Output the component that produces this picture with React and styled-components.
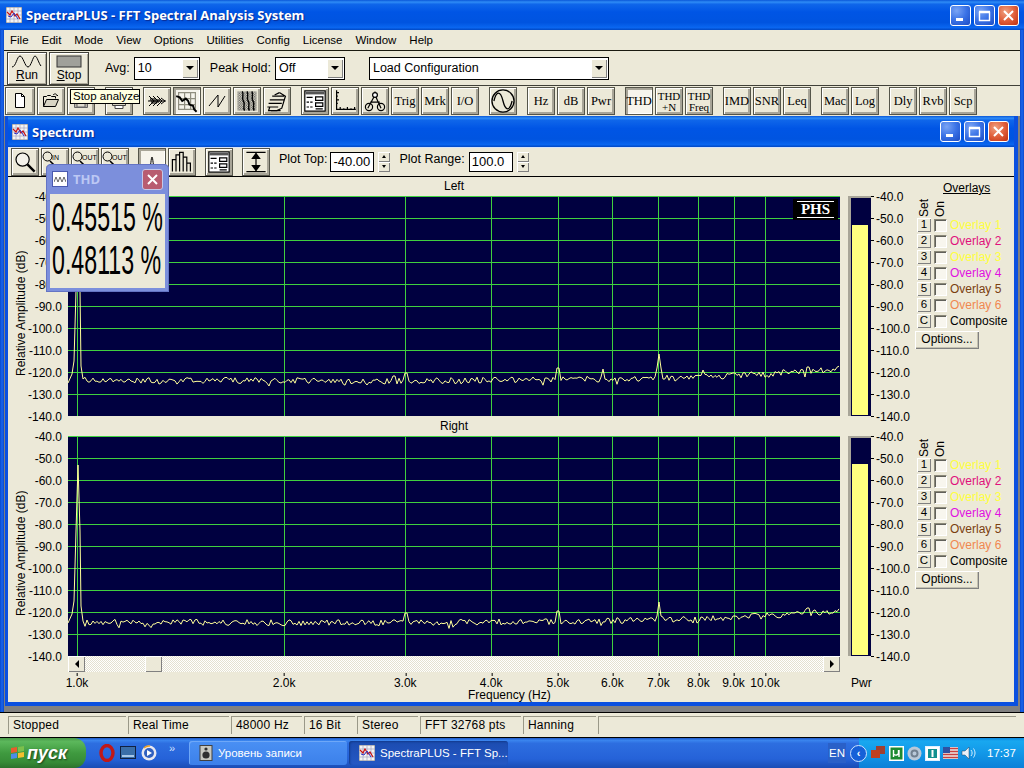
import styled, { createGlobalStyle } from "styled-components";

const GlobalStyle = createGlobalStyle`
  html, body {
    margin: 0;
    width: 1024px;
    height: 768px;
    overflow: hidden;
    background: #ece9d8;
  }
  * { box-sizing: border-box; }
`;

const Desktop = styled.div`
  position: relative;
  width: 1024px;
  height: 768px;
  display: flex;
  flex-direction: column;
  overflow: hidden;
  font-family: "Liberation Sans", Arial, sans-serif;
  font-size: 12px;
  color: #000;
`;

const TitleBar = styled.div`
  height: ${(p) => (p.$child ? "31px" : "30px")};
  flex: none;
  display: flex;
  align-items: center;
  gap: 4px;
  padding: ${(p) => (p.$child ? "0 5px 0 4px" : "0 5px 0 6px")};
  color: #fff;
  font-family: "Open Sans", "Liberation Sans", sans-serif;
  font-weight: 700;
  font-size: 13px;
  text-shadow: 1px 1px 1px #0a2a90;
  background: linear-gradient(180deg, #0a57d8 0%, #2f8cf6 7%, #0f66ea 14%, #0055e5 40%, #0054e0 75%, #0a66f0 92%, #0048c4 100%);
`;

const TitleText = styled.span`
  flex: 1;
  white-space: nowrap;
`;

const WinButtons = styled.div`
  display: flex;
  gap: 3px;
`;

const WinButton = styled.div`
  width: 21px;
  height: 21px;
  border: 1px solid #fff;
  border-radius: 3px;
  display: flex;
  align-items: center;
  justify-content: center;
  background: ${(p) =>
    p.$close
      ? "radial-gradient(circle at 35% 30%, #f0a080 0%, #e0603c 50%, #c03010 100%)"
      : "radial-gradient(circle at 30% 25%, #7aa4f4 0%, #3a72e6 50%, #1c4cc4 100%)"};
`;

const MainBody = styled.div`
  flex: 1;
  display: flex;
  flex-direction: column;
  min-height: 0;
  padding: 0 4px;
  background: linear-gradient(90deg, #0a48c8 0, #1a66ee 2px, #0a48c8 4px, #0a48c8 1020px, #1a66ee 1022px, #0a48c8 1024px);
`;

const MenuBar = styled.div`
  height: 20px;
  flex: none;
  display: flex;
  align-items: center;
  background: #ece9d8;
  padding-left: 6px;
  gap: 13px;
  font-size: 11.5px;
`;

const RunBar = styled.div`
  height: 35px;
  flex: none;
  display: flex;
  align-items: center;
  border-top: 1px solid #1a1a10;
  background: #ece9d8;
  padding-left: 3px;
`;

const RunButton = styled.button`
  width: 40px;
  height: 33px;
  padding: 1px 0 0;
  margin-right: 2px;
  margin-top: 1px;
  border: 1px solid #404038;
  background: #ece9d8;
  box-shadow: inset 1px 1px #fff, inset -1px -1px #aca899;
  display: flex;
  flex-direction: column;
  align-items: center;
  font: 12px "Liberation Sans", sans-serif;
  line-height: 13px;
  color: #000;
`;

const FieldLabel = styled.span`
  margin-left: ${(p) => p.$ml || 10}px;
  margin-right: 4px;
  font-size: 12.5px;
  white-space: nowrap;
`;

const Select = styled.div`
  width: ${(p) => p.$w}px;
  height: 23px;
  margin-left: ${(p) => p.$ml || 0}px;
  border: 1px solid #000;
  background: #fff;
  display: flex;
  align-items: center;
  justify-content: space-between;
  padding: 0 1px 0 3px;
  font-size: 12.5px;
`;

const DropArrow = styled.div`
  width: 16px;
  height: 19px;
  background: #ece9d8;
  box-shadow: inset 1px 1px #fff, inset -1px -1px #808080;
  display: flex;
  align-items: center;
  justify-content: center;
  &::after {
    content: "";
    border: 4px solid transparent;
    border-top: 4px solid #000;
    border-bottom: 0;
    border-left-width: 4px;
    border-right-width: 4px;
  }
`;

const ToolBar = styled.div`
  height: 31px;
  flex: none;
  display: flex;
  align-items: center;
  gap: ${(p) => p.$gap}px;
  padding-left: ${(p) => p.$pad}px;
  border-top: 1px solid #404038;
  background: #ece9d8;
`;

const Group = styled.div`
  display: flex;
  gap: 2px;
`;

const ToolButton = styled.div`
  width: ${(p) => p.$w || 28}px;
  height: 28px;
  flex: none;
  border: 1px solid #55554a;
  background: ${(p) => (p.$on ? "#f6f4ec" : "#ece9d8")};
  box-shadow: ${(p) =>
    p.$on
      ? "inset 2px 2px #a8a598, inset -1px -1px #fff"
      : "inset 1px 1px #fff, inset -2px -2px #a8a598"};
  display: flex;
  flex-direction: column;
  align-items: center;
  justify-content: center;
  font-family: "Liberation Serif", serif;
  font-size: ${(p) => p.$fs || 12.5}px;
  line-height: 10px;
  white-space: nowrap;
`;

const Workspace = styled.div`
  flex: 1;
  min-height: 0;
  background: #808080;
  padding: 0 2px 6px 1px;
  display: flex;
`;

const ChildWindow = styled.div`
  flex: 1;
  display: flex;
  flex-direction: column;
  border: solid #0a50e0;
  border-width: 0 4px 4px 3px;
  background: #ece9d8;
`;

const ChildToolBar = styled(ToolBar)`
  height: 30px;
  border-top: 1px solid #d8e4f8;
  border-bottom: 1px solid #000;
  padding-bottom: 1px;
  font-family: "Liberation Sans", sans-serif;
`;

const PlotLabel = styled.span`
  font-size: 12.5px;
  white-space: nowrap;
  margin-right: ${(p) => p.$mr || 0}px;
`;

const SpinField = styled.div`
  width: 44px;
  height: 20px;
  border: 1px solid #000;
  background: #fff;
  padding-left: 2px;
  line-height: 18px;
  font-size: 13px;
  white-space: nowrap;
  overflow: hidden;
`;

const Spinner = styled.div`
  display: flex;
  flex-direction: column;
  margin: 0 ${(p) => p.$mr || 0}px 0 2px;
`;

const SpinPart = styled.div`
  width: 12px;
  height: 10px;
  background: #ece9d8;
  box-shadow: inset 1px 1px #fff, inset -1px -1px #808080;
  display: flex;
  align-items: center;
  justify-content: center;
  &::after {
    content: "";
    border: 2px solid transparent;
    ${(p) => (p.$up ? "border-bottom: 3px solid #000; border-top: 0;" : "border-top: 3px solid #000; border-bottom: 0;")}
  }
`;

const PlotArea = styled.div`
  flex: 1;
  display: flex;
  flex-direction: column;
`;

const Channel = styled.div`
  display: grid;
  grid-template-columns: 60px 772px 8px 23px 44px 1fr;
  grid-template-rows: ${(p) => p.$band}px 220px;
`;

const ChannelName = styled.div`
  grid-column: 2;
  grid-row: 1;
  text-align: center;
  line-height: ${(p) => p.$band}px;
`;

const YAxis = styled.div`
  grid-column: 1;
  grid-row: 2;
  display: flex;
  justify-content: space-between;
  padding: 0 6px 0 6px;
`;

const AxisTitle = styled.div`
  writing-mode: vertical-rl;
  transform: rotate(180deg);
  text-align: center;
  height: 220px;
  padding-bottom: 14px;
  width: 14px;
  white-space: nowrap;
`;

const Scale = styled.div`
  height: 220px;
  display: flex;
  flex-direction: column;
  align-items: ${(p) => (p.$left ? "flex-start" : "flex-end")};
  & > div {
    height: 22px;
    line-height: 22px;
    flex: none;
    white-space: nowrap;
  }
  & > div:first-child {
    margin-top: -10px;
  }
`;

const PlotBox = styled.div`
  grid-column: 2;
  grid-row: 2;
  position: relative;
  width: 772px;
  height: 220px;
  background: #000040;
`;

const PhsBadge = styled.div`
  position: absolute;
  top: 3px;
  right: 2px;
  width: 45px;
  height: 21px;
  background: #000;
  color: #fff;
  font: 700 15px/15px "Liberation Serif", serif;
  display: flex;
  align-items: center;
  justify-content: center;
  &::before {
    content: "";
    position: absolute;
    top: 2px;
    left: 4px;
    right: 4px;
    border-top: 1px solid #fff;
  }
  &::after {
    content: "";
    position: absolute;
    bottom: 2px;
    left: 4px;
    right: 4px;
    border-top: 1px solid #fff;
  }
`;

const Meter = styled.div`
  grid-column: 4;
  grid-row: 2;
  background: #000040;
  border-left: 3px solid #a8a598;
  border-top: 2px solid #a8a598;
  padding-right: 2px;
  display: flex;
  flex-direction: column;
  justify-content: flex-end;
`;

const MeterFill = styled.div`
  background: #ffff80;
  margin: 0 1px 1px 1px;
`;

const MeterScale = styled.div`
  grid-column: 5;
  grid-row: 2;
  padding-left: 5px;
  position: relative;
  & > div > div {
    position: relative;
  }
  & > div > div::before {
    content: "";
    position: absolute;
    left: -5px;
    top: 10px;
    width: 3px;
    border-top: 1px solid #000;
  }
`;

const OverlayCol = styled.div`
  grid-column: 6;
  grid-row: 1 / span 2;
  display: flex;
  flex-direction: column;
  align-items: flex-start;
`;

const OverlayHead = styled.div`
  height: ${(p) => p.$band}px;
  width: 100%;
  padding: 5px 0 0 28px;
  flex: none;
  line-height: 13px;
  text-decoration: underline;
  white-space: nowrap;
`;

const SetOn = styled.div`
  height: 21px;
  display: flex;
  flex: none;
  padding-left: 4px;
  gap: 5px;
`;

const SideText = styled.div`
  writing-mode: vertical-rl;
  transform: rotate(180deg);
  width: 11px;
  line-height: 11px;
  white-space: nowrap;
`;

const OverlayRow = styled.div`
  height: 16px;
  flex: none;
  display: flex;
  align-items: center;
  padding-left: 2px;
  white-space: nowrap;
`;

const SetButton = styled.div`
  width: 14px;
  height: 14px;
  background: #ece9d8;
  box-shadow: inset 1px 1px #fff, inset -1px -1px #808080;
  text-align: center;
  line-height: 13px;
  font-size: 11.5px;
`;

const Check = styled.div`
  width: 13px;
  height: 13px;
  margin: 0 3px 0 3px;
  background: #f8f6ee;
  border: 1px solid;
  border-color: #8a8878 #fff #fff #8a8878;
  box-shadow: inset 1px 1px #60605a;
`;

const OverlayName = styled.span`
  color: ${(p) => p.$color};
`;

const OptionsButton = styled.div`
  width: 64px;
  height: 18px;
  margin-top: 2px;
  background: #ece9d8;
  box-shadow: inset 1px 1px #fff, inset -1px -1px #808080, inset -2px -2px #c4c1b0;
  text-align: center;
  line-height: 17px;
  white-space: nowrap;
`;

const ScrollRow = styled.div`
  margin-left: 60px;
  width: 772px;
  height: 16px;
  display: flex;
  justify-content: space-between;
  background: repeating-conic-gradient(#fff 0 25%, #e4e1d0 0 50%) 0 0 / 2px 2px;
`;

const ScrollBtn = styled.div`
  width: 17px;
  height: 16px;
  background: #ece9d8;
  box-shadow: inset 1px 1px #fff, inset -1px -1px #808080;
  display: flex;
  align-items: center;
  justify-content: center;
  &::after {
    content: "";
    border: 4px solid transparent;
    ${(p) => (p.$left ? "border-right: 4px solid #000; border-left: 0;" : "border-left: 4px solid #000; border-right: 0;")}
  }
`;

const ScrollThumb = styled(ScrollBtn)`
  margin-left: 60px;
  margin-right: auto;
  &::after { display: none; }
`;

const FreqAxis = styled.div`
  position: relative;
  height: 29px;
  border-top: 1px solid transparent;
`;

const FreqTick = styled.div`
  position: absolute;
  top: 0;
  transform: translateX(-50%);
  padding-top: 3px;
  line-height: 14px;
  white-space: nowrap;
  &::before {
    content: "";
    position: absolute;
    left: 50%;
    top: 0;
    height: 3px;
    border-left: 1px solid #000;
  }
`;

const FreqTitle = styled.div`
  position: absolute;
  top: 15px;
  left: 460px;
  line-height: 14px;
`;

const PwrLabel = styled.div`
  position: absolute;
  top: 3px;
  left: 843px;
  line-height: 14px;
`;

const StatusBar = styled.div`
  height: 26px;
  flex: none;
  display: flex;
  gap: 2px;
  background: #ece9d8;
  border-top: 1px solid #000;
  border-bottom: 1px solid #000;
  padding: 3px 8px 3px 8px;
`;

const StatusPanel = styled.div`
  width: ${(p) => (p.$w ? `${p.$w}px` : "auto")};
  flex: ${(p) => (p.$w ? "none" : 1)};
  border-left: 1px solid #9a9888;
  border-top: 1px solid #9a9888;
  padding-left: 4px;
  line-height: 17px;
  letter-spacing: 0.2px;
`;

const Taskbar = styled.div`
  height: 30px;
  flex: none;
  display: flex;
  align-items: center;
  color: #fff;
  background: linear-gradient(180deg, #1f5ac8 0%, #3a84ee 8%, #2d6ee0 18%, #2562d8 70%, #1a4cb4 100%);
`;

const StartButton = styled.div`
  width: 86px;
  height: 30px;
  display: flex;
  align-items: center;
  gap: 1px;
  padding-left: 10px;
  border-radius: 0 12px 12px 0;
  background: linear-gradient(180deg, #4a9a4a 0%, #5cb85c 12%, #3f9a3f 50%, #378c37 80%, #2c722c 100%);
  font: italic 700 18px "Liberation Sans", sans-serif;
  text-shadow: 1px 1px 2px #1a401a;
`;

const QuickLaunch = styled.div`
  display: flex;
  align-items: center;
  gap: 5px;
  padding-left: 13px;
  width: 103px;
  flex: none;
`;

const Chevrons = styled.span`
  font-size: 11px;
  margin: -10px 0 0 7px;
  color: #cfe0ff;
`;

const TaskButton = styled.div`
  width: ${(p) => p.$w}px;
  height: 24px;
  margin-right: 2px;
  flex: none;
  display: flex;
  align-items: center;
  gap: 5px;
  padding-left: 10px;
  border-radius: 3px;
  font-size: 11.5px;
  white-space: nowrap;
  background: ${(p) =>
    p.$on
      ? "linear-gradient(180deg, #1c4cb0 0%, #2458c4 100%)"
      : "linear-gradient(180deg, #4a90f4 0%, #3c80ea 100%)"};
  box-shadow: ${(p) => (p.$on ? "inset 1px 1px 2px #123a8c" : "inset 1px 1px #6ea8f8")};
`;

const Lang = styled.div`
  margin-left: auto;
  background: #2a60c8;
  font-size: 11.5px;
  line-height: 20px;
  padding: 0 1px;
  margin-right: 4px;
  margin-bottom: 1px;
`;

const TrayArrow = styled.div`
  width: 17px;
  height: 17px;
  border-radius: 50%;
  background: #1660d8;
  border: 1px solid #cfe4ff;
  display: flex;
  align-items: center;
  justify-content: center;
  font-weight: 700;
  font-size: 11px;
  z-index: 1;
  margin-right: -8px;
`;

const Tray = styled.div`
  height: 30px;
  width: 165px;
  flex: none;
  display: flex;
  align-items: center;
  gap: 3px;
  padding-left: 12px;
  background: linear-gradient(180deg, #0d88e0 0%, #18a8f0 10%, #1298e8 50%, #0c80d8 100%);
  font-size: 11.5px;
`;

const Clock = styled.span`
  margin-left: 7px;
`;

const Tooltip = styled.div`
  position: absolute;
  left: 70px;
  top: 89px;
  width: 70px;
  height: 15px;
  background: #ffffe1;
  border: 1px solid #000;
  font-size: 11.5px;
  line-height: 13px;
  padding-left: 2px;
  white-space: nowrap;
  overflow: hidden;
`;

const ThdWindow = styled.div`
  position: absolute;
  left: 46px;
  top: 164px;
  width: 123px;
  height: 128px;
  padding: 0 4px 4px;
  border-radius: 5px 5px 0 0;
  background: #7c8fdc;
  box-shadow: inset 0 0 0 1px #6474c4;
  display: flex;
  flex-direction: column;
`;

const ThdTitle = styled.div`
  height: 30px;
  flex: none;
  display: flex;
  align-items: center;
  gap: 5px;
  padding-left: 2px;
  font: 700 13px "Open Sans", sans-serif;
  color: #bcc8f4;
`;

const ThdIcon = styled.div`
  width: 16px;
  height: 16px;
  background: #fff;
  border: 1px solid #4a5ab0;
  display: flex;
  align-items: center;
  justify-content: center;
`;

const ThdClose = styled.div`
  margin-left: auto;
  width: 21px;
  height: 21px;
  border-radius: 3px;
  border: 1px solid #c4c8e8;
  background: #b85c70;
  display: flex;
  align-items: center;
  justify-content: center;
  margin-right: 2px;
`;

const ThdBody = styled.div`
  flex: 1;
  background: #ece9d8;
  padding: 2px 0 0 2px;
  overflow: hidden;
`;

const BigValue = styled.div`
  font-size: 40px;
  line-height: 43px;
  height: 43px;
  white-space: nowrap;
  transform: scaleX(0.58);
  transform-origin: left center;
`;

// ---- drawings ----

const AppIcon = ({ size = 16 }) => (
  <svg width={size} height={size} viewBox="0 0 16 16">
    <rect width="16" height="16" fill="#f4f4f4" stroke="#808080" />
    <path d="M0 4h16M0 8h16M0 12h16M4 0v16M8 0v16M12 0v16" stroke="#a0a0c0" strokeWidth="0.7" />
    <path d="M1 5l3 3 2-4 3 5 2-2 3 5" stroke="#c81010" fill="none" strokeWidth="1.2" />
    <path d="M2 9l3 1 3-4 4 6" stroke="#3030c0" fill="none" />
  </svg>
);

const MinGlyph = () => (
  <svg width="13" height="13" viewBox="0 0 13 13"><rect x="2" y="9" width="7" height="3" fill="#fff" /></svg>
);
const MaxGlyph = () => (
  <svg width="13" height="13" viewBox="0 0 13 13"><path d="M1.5 3.5h10v8h-10zM1 2.5h11" fill="none" stroke="#fff" strokeWidth="1.4" /></svg>
);
const CloseGlyph = () => (
  <svg width="13" height="13" viewBox="0 0 13 13"><path d="M2 2l9 9M11 2l-9 9" stroke="#fff" strokeWidth="2" /></svg>
);

const WindowControls = () => (
  <WinButtons>
    <WinButton><MinGlyph /></WinButton>
    <WinButton><MaxGlyph /></WinButton>
    <WinButton $close><CloseGlyph /></WinButton>
  </WinButtons>
);

const ic = { fill: "none", stroke: "#000" };
const Ico = ({ children, s = 20 }) => (
  <svg width={s} height={s} viewBox="0 0 20 20" {...ic}>{children}</svg>
);

const icons = {
  page: <Ico><path d="M5.5 2.5h6l3 3v11h-9z" fill="#fff" /><path d="M11.5 2.5v3h3" /></Ico>,
  open: <Ico><path d="M2.5 15.5v-10h3l1 -1h3l1 1h4v2" fill="#ece9d8" /><path d="M2.5 15.5l3 -7h12l-3 7z" fill="#d8d5c4" /><path d="M12 4c2 -2 4 -1 4 1l1 -1" /></Ico>,
  save: <Ico><path d="M3.5 3.5h13v13h-13z" fill="#b8b5a8" stroke="#666" /><path d="M6 11h8v5h-8z" fill="#e0ddd0" stroke="#666" /></Ico>,
  print: <Ico><path d="M3.5 10.5h13v4h-13z" fill="#d8d5c4" stroke="#444" /><path d="M6 14.5h8v3h-8z" fill="#fff" stroke="#444" /></Ico>,
  signal: <Ico><path d="M2 5l5 5-5 5M6 5l5 5-5 5M10 5l5 5-5 5M14 7l4 3-4 3M1 10h18" /><path d="M3 10l1-3 1 6 1-6 1 6 1-6 1 6 1-5 1 4 1-4 1 3" strokeWidth=".7" /></Ico>,
  grid: <Ico s={24}><path d="M3 3h14v14H3zM3 8h14M3 13h14M8 3v14M13 3v14" stroke="#908e80" /><path d="M1 6l3 1 2 3 3-2 2 2 1 3 3 1 1 3 2 2" strokeWidth="1.6" /></Ico>,
  saw: <Ico><path d="M2 15L11 4v12l7-11" strokeWidth="1" /></Ico>,
  fall: (
    <Ico s={24}>
      <pattern id="dith" width="2" height="2" patternUnits="userSpaceOnUse"><rect width="1" height="1" fill="#555" stroke="none" /><rect x="1" y="1" width="1" height="1" fill="#555" stroke="none" /></pattern>
      <rect x="2" y="2" width="16" height="16" fill="url(#dith)" stroke="none" />
      <path d="M6 2c2 3 -1 5 1 8s-1 5 1 8M10 2c2 3 -1 5 1 8s-1 5 1 8M14 2c2 3 -1 5 1 8s-1 5 1 8" strokeWidth="1.2" />
    </Ico>
  ),
  bars3d: <Ico s={24}><path d="M2 15h9M3 12h11M4 9h12M6 6h10M12 3l5 3-3 10-4 2H3l1-3" strokeWidth="1" /><path d="M8 5l4-2M5 18h8" /></Ico>,
  panel: <Ico s={24}><path d="M1.5 1.5h17v17h-17z" fill="#fff" /><path d="M2 3.5h16" strokeWidth="2" stroke="#555" /><path d="M3 7h5M10.5 6.5h6v3h-6zM10.5 11.5h6v3h-6zM3 11h2M6 11h2M3 15h2M6 15h2M10.5 16.5h6" strokeWidth="1" /></Ico>,
  axis: <Ico s={24}><path d="M3 1v16h16M3 3h2M3 6h1M3 9h2M3 12h1M6 17v-2M9 17v-1M12 17v-2M15 17v-1M18 17v-2" strokeWidth="1" /></Ico>,
  compass: <Ico s={24}><path d="M10 2v3M10 5l-6 11M10 5l5 11M6 11h8" strokeWidth="1" /><circle cx="5" cy="15" r="3" /><circle cx="15" cy="15" r="3" /><circle cx="10" cy="5" r="2" fill="#fff" /></Ico>,
  sine: <Ico s={26}><circle cx="10" cy="10" r="8.5" /><path d="M3 10c2 -8 5 -8 7 0s5 8 7 0" strokeWidth="1" /></Ico>,
  loupe: <Ico s={24}><circle cx="8" cy="8" r="5.5" fill="#f4f2ea" strokeWidth="1" /><path d="M12 12l6 6" strokeWidth="2" /></Ico>,
  spike: <Ico><path d="M2 17h16M7 17c2-1 2-12 3-12s1 11 3 12" strokeWidth="1" /></Ico>,
  hist: <Ico s={24}><path d="M2 18V8h3V4h3V2h3v4h3v5h3v7M5 18V8M8 18V4M11 18V2M14 18V6M17 18v-7" strokeWidth="1" /></Ico>,
  range: <Ico s={24}><path d="M2 2h16M2 18h16M10 3v14" /><path d="M7 7l3-4 3 4zM7 13l3 4 3-4z" fill="#000" /></Ico>,
};

const ZoomIcon = ({ word, second }) => (
  <>
    <svg width="26" height="13" viewBox="0 0 26 13" fill="none" stroke="#000">
      <circle cx="5.5" cy="5.5" r="4.5" />
      <path d="M8 10l4 4" strokeWidth="1.6" />
      <text x="10" y="9" fontSize="7" fontFamily="Liberation Sans" stroke="none" fill="#000">{word}</text>
    </svg>
    <small style={{ fontSize: 7, lineHeight: "8px" }}>{second}</small>
  </>
);

// ---- data ----

const yLabels = Array.from({ length: 11 }, (_, i) => (-40 - i * 10).toFixed(1));
const overlayNames = [
  ["1", "Overlay 1", "#ffff40"],
  ["2", "Overlay 2", "#e0107c"],
  ["3", "Overlay 3", "#ffff40"],
  ["4", "Overlay 4", "#e010e0"],
  ["5", "Overlay 5", "#7a4010"],
  ["6", "Overlay 6", "#f08850"],
  ["C", "Composite", "#000"],
];
const freqs = [
  [1000, "1.0k"], [2000, "2.0k"], [3000, "3.0k"], [4000, "4.0k"], [5000, "5.0k"],
  [6000, "6.0k"], [7000, "7.0k"], [8000, "8.0k"], [9000, "9.0k"], [10000, "10.0k"],
];
const freqX = (f) => 9 + 688 * Math.log10(f / 1000);

const lerp = (pts, x) => {
  for (let i = 1; i < pts.length; i++) {
    if (x <= pts[i][0]) {
      const [x0, y0] = pts[i - 1];
      const [x1, y1] = pts[i];
      return y0 + ((y1 - y0) * (x - x0)) / (x1 - x0);
    }
  }
  return pts[pts.length - 1][1];
};

const baseLine = [[0, 184], [330, 185], [530, 183], [640, 181], [710, 177], [770, 173]];
const leftPeaks = [[326, 166], [338, 163], [398, 178], [490, 158], [535, 173], [591, 158], [635, 174], [666, 163], [726, 164], [740, 157]];
const rightPeaks = [[326, 170], [338, 163], [490, 161], [536, 173], [591, 166], [666, 166], [726, 167], [740, 158]];

function tracePath(seed, drop, peaks) {
  let s = seed;
  const rnd = () => (s = (s * 16807) % 2147483647) / 2147483647;
  const head = [[0, 187], [4, 178], [6, 165], [8, 95], [10, 29], [12, 95], [13, 170], [15, 183 + drop]];
  const pts = [...head];
  for (let x = 17; x <= 771; x += 2) {
    let y = lerp(baseLine, x) + drop + (rnd() - 0.5) * 6;
    if (rnd() < 0.05) y += 3;
    for (const [px, top] of peaks) {
      if (Math.abs(x - px) < 1) y = top;
      else if (Math.abs(x - px) < 3) y = Math.min(y, top + 14);
    }
    pts.push([x, y]);
  }
  return "M" + pts.map((p) => `${p[0]} ${p[1].toFixed(1)}`).join("L");
}

const Plot = ({ seed, drop, peaks, badge }) => (
  <PlotBox>
    <svg width="772" height="220" style={{ display: "block" }}>
      {yLabels.map((_, i) => (
        <line key={i} x1="0" x2="772" y1={i * 22 + 0.5} y2={i * 22 + 0.5} stroke="#3fd03f" shapeRendering="crispEdges" />
      ))}
      {freqs.map(([f]) => (
        <line key={f} x1={Math.round(freqX(f)) + 0.5} x2={Math.round(freqX(f)) + 0.5} y1="0" y2="220" stroke="#3fd03f" shapeRendering="crispEdges" />
      ))}
      <path d={tracePath(seed, drop, peaks)} fill="none" stroke="#ffff99" strokeWidth="1" />
    </svg>
    {badge && <PhsBadge>PHS</PhsBadge>}
  </PlotBox>
);

const ChannelRow = ({ name, band, seed, drop, peaks, level, badge, header }) => (
  <Channel $band={band}>
    <ChannelName $band={band}>{name}</ChannelName>
    <YAxis>
      <AxisTitle>Relative Amplitude (dB)</AxisTitle>
      <Scale>{yLabels.map((l) => <div key={l}>{l}</div>)}</Scale>
    </YAxis>
    <Plot seed={seed} drop={drop} peaks={peaks} badge={badge} />
    <Meter><MeterFill style={{ height: level }} /></Meter>
    <MeterScale>
      <Scale $left>{yLabels.map((l) => <div key={l}>{l}</div>)}</Scale>
    </MeterScale>
    <OverlayCol>
      <OverlayHead $band={band}>{header}</OverlayHead>
      <SetOn>
        <SideText>Set</SideText>
        <SideText>On</SideText>
      </SetOn>
      {overlayNames.map(([k, label, color]) => (
        <OverlayRow key={k}>
          <SetButton>{k}</SetButton>
          <Check />
          <OverlayName $color={color}>{label}</OverlayName>
        </OverlayRow>
      ))}
      <OptionsButton>Options...</OptionsButton>
    </OverlayCol>
  </Channel>
);

const T = ({ a, b, ...rest }) => (
  <ToolButton {...rest} $fs={b ? 11 : rest.$fs}>
    {a}
    {b && <span style={{ marginTop: 1 }}>{b}</span>}
  </ToolButton>
);

export default function App() {
  return (
    <Desktop>
      <GlobalStyle />
      <TitleBar>
        <AppIcon />
        <TitleText>SpectraPLUS - FFT Spectral Analysis System</TitleText>
        <WindowControls />
      </TitleBar>
      <MainBody>
        <MenuBar>
          {["File", "Edit", "Mode", "View", "Options", "Utilities", "Config", "License", "Window", "Help"].map((m) => (
            <span key={m}>{m}</span>
          ))}
        </MenuBar>
        <RunBar>
          <RunButton>
            <svg width="32" height="15" viewBox="0 0 32 15" fill="none" stroke="#000">
              <path d="M1 13C5 13 6 2 9 2s5 11 8 11 5-11 7-11 4 8 6 10" />
            </svg>
            <span><u>R</u>un</span>
          </RunButton>
          <RunButton>
            <svg width="32" height="15" viewBox="0 0 32 15">
              <rect x="4" y="2" width="24" height="11" fill="#a0a09a" stroke="#333" />
            </svg>
            <span><u>S</u>top</span>
          </RunButton>
          <FieldLabel $ml={14}>Avg:</FieldLabel>
          <Select $w={66}>10<DropArrow /></Select>
          <FieldLabel>Peak Hold:</FieldLabel>
          <Select $w={70}>Off<DropArrow /></Select>
          <Select $w={240} $ml={24}>Load Configuration<DropArrow /></Select>
        </RunBar>
        <ToolBar $gap={10} $pad={1}>
          <Group>
            <ToolButton $w={30}>{icons.page}</ToolButton>
            <ToolButton>{icons.open}</ToolButton>
            <ToolButton>{icons.save}</ToolButton>
          </Group>
          <Group><ToolButton>{icons.print}</ToolButton></Group>
          <Group>
            <ToolButton>{icons.signal}</ToolButton>
            <ToolButton $on>{icons.grid}</ToolButton>
            <ToolButton>{icons.saw}</ToolButton>
            <ToolButton>{icons.fall}</ToolButton>
            <ToolButton>{icons.bars3d}</ToolButton>
          </Group>
          <Group>
            <ToolButton>{icons.panel}</ToolButton>
            <ToolButton>{icons.axis}</ToolButton>
            <ToolButton>{icons.compass}</ToolButton>
            <T a="Trig" />
            <T a="Mrk" />
            <T a="I/O" />
          </Group>
          <Group><ToolButton>{icons.sine}</ToolButton></Group>
          <Group><T a="Hz" /><T a="dB" /><T a="Pwr" /></Group>
          <Group>
            <T a="THD" $on />
            <T a="THD" b="+N" />
            <T a="THD" b="Freq" />
          </Group>
          <Group><T a="IMD" /><T a="SNR" /><T a="Leq" /></Group>
          <Group><T a="Mac" /><T a="Log" /></Group>
          <Group><T a="Dly" /><T a="Rvb" /><T a="Scp" /></Group>
        </ToolBar>
        <Workspace>
          <ChildWindow>
            <TitleBar $child>
              <AppIcon />
              <TitleText>Spectrum</TitleText>
              <WindowControls />
            </TitleBar>
            <ChildToolBar $gap={9} $pad={3}>
              <Group>
                <ToolButton>{icons.loupe}</ToolButton>
                <ToolButton><ZoomIcon word="IN" second="FULL" /></ToolButton>
                <ToolButton><ZoomIcon word="OUT" second="FULL" /></ToolButton>
                <ToolButton><ZoomIcon word="OUT" second="ALL" /></ToolButton>
              </Group>
              <Group>
                <ToolButton $on>{icons.spike}</ToolButton>
                <ToolButton>{icons.hist}</ToolButton>
              </Group>
              <Group><ToolButton>{icons.panel}</ToolButton></Group>
              <Group><ToolButton>{icons.range}</ToolButton></Group>
              <Group>
                <PlotLabel $mr={1}>Plot Top:</PlotLabel>
                <SpinField>-40.00</SpinField>
                <Spinner $mr={7}><SpinPart $up /><SpinPart /></Spinner>
                <PlotLabel $mr={2}>Plot Range:</PlotLabel>
                <SpinField>100.0</SpinField>
                <Spinner><SpinPart $up /><SpinPart /></Spinner>
              </Group>
            </ChildToolBar>
            <PlotArea>
              <ChannelRow name="Left" band={19} seed={4711} drop={0} peaks={leftPeaks} level={190} badge header="Overlays" />
              <ChannelRow name="Right" band={20} seed={90210} drop={2} peaks={rightPeaks} level={191} />
              <ScrollRow>
                <ScrollBtn $left />
                <ScrollThumb />
                <ScrollBtn />
              </ScrollRow>
              <FreqAxis>
                {freqs.map(([f, label]) => (
                  <FreqTick key={f} style={{ left: 60 + freqX(f) }}>{label}</FreqTick>
                ))}
                <FreqTitle>Frequency (Hz)</FreqTitle>
                <PwrLabel>Pwr</PwrLabel>
              </FreqAxis>
            </PlotArea>
          </ChildWindow>
        </Workspace>
      </MainBody>
      <StatusBar>
        <StatusPanel $w={118}>Stopped</StatusPanel>
        <StatusPanel $w={101}>Real Time</StatusPanel>
        <StatusPanel $w={71}>48000 Hz</StatusPanel>
        <StatusPanel $w={51}>16 Bit</StatusPanel>
        <StatusPanel $w={61}>Stereo</StatusPanel>
        <StatusPanel $w={101}>FFT 32768 pts</StatusPanel>
        <StatusPanel $w={73}>Hanning</StatusPanel>
        <StatusPanel />
      </StatusBar>
      <Taskbar>
        <StartButton>
          <svg width="16" height="16" viewBox="0 0 16 16">
            <path d="M1 3l6-1v5l-6 1z" fill="#e85c2c" />
            <path d="M8 2l6-1v5l-6 1z" fill="#7cc04c" />
            <path d="M1 9l6-1v5l-6 1z" fill="#4c8ce8" />
            <path d="M8 8l6-1v5l-6 1z" fill="#f4c030" />
          </svg>
          пуск
        </StartButton>
        <QuickLaunch>
          <svg width="16" height="18" viewBox="0 0 16 18"><ellipse cx="8" cy="9" rx="6" ry="7.5" fill="none" stroke="#c01818" strokeWidth="3.4" /></svg>
          <svg width="16" height="14" viewBox="0 0 16 14"><rect x="0.5" y="0.5" width="15" height="12" fill="#3a6ea8" stroke="#102040" /><rect x="2" y="9" width="12" height="2" fill="#a8c8e8" /></svg>
          <svg width="16" height="16" viewBox="0 0 16 16"><circle cx="8" cy="8" r="7.5" fill="#e8e8f0" /><circle cx="8" cy="8" r="5" fill="#3060c0" /><path d="M6 5l5 3-5 3z" fill="#fff" /><path d="M3 3a7 7 0 0 1 6-2" stroke="#f0a020" fill="none" strokeWidth="1.5" /></svg>
          <Chevrons>»</Chevrons>
        </QuickLaunch>
        <TaskButton $w={158}>
          <svg width="14" height="16" viewBox="0 0 14 16"><rect x="1" y="0.5" width="12" height="15" fill="#c8c8c0" stroke="#404040" /><circle cx="7" cy="10" r="3.6" fill="#303030" /><circle cx="7" cy="4" r="1.6" fill="#303030" /></svg>
          Уровень записи
        </TaskButton>
        <TaskButton $w={159} $on><AppIcon />SpectraPLUS - FFT Sp...</TaskButton>
        <Lang>EN</Lang>
        <TrayArrow>‹</TrayArrow>
        <Tray>
          <svg width="15" height="14" viewBox="0 0 15 14"><rect x="5" y="0" width="9" height="8" fill="#a04030" /><rect x="0" y="4" width="9" height="8" fill="#c04020" /></svg>
          <svg width="15" height="15" viewBox="0 0 15 15"><rect width="15" height="15" fill="#fff" /><rect x="1.5" y="1.5" width="12" height="12" fill="#1c8a30" /><path d="M4.5 4v7M4.5 8c2 2 5 1 5-1V4M10 4v7" stroke="#fff" strokeWidth="1.4" fill="none" /></svg>
          <svg width="15" height="15" viewBox="0 0 15 15"><circle cx="7.5" cy="7.5" r="7" fill="#b8c8d8" /><circle cx="7.5" cy="7.5" r="3" fill="none" stroke="#708090" strokeWidth="2" /></svg>
          <svg width="15" height="15" viewBox="0 0 15 15"><rect x="0.5" y="0.5" width="14" height="14" fill="#fff" stroke="#e0f0ff" /><rect x="3" y="3" width="9" height="9" fill="#109090" /><rect x="6.5" y="4" width="2" height="7" fill="#fff" /></svg>
          <svg width="15" height="12" viewBox="0 0 15 12"><rect width="15" height="12" fill="#e8e8e8" /><path d="M0 1.5h15M0 4.5h15M0 7.5h15M0 10.5h15" stroke="#c84040" strokeWidth="1.4" /><rect width="7" height="6" fill="#3050a0" /></svg>
          <svg width="16" height="14" viewBox="0 0 16 14"><path d="M1 5h3l4-4v12l-4-4H1z" fill="#e8f0f8" stroke="#204060" strokeWidth=".5" /><path d="M10 4c1.5 2 1.5 4 0 6M12.5 2.5c2 3 2 6 0 9" stroke="#d8f0ff" fill="none" /></svg>
          <Clock>17:37</Clock>
        </Tray>
      </Taskbar>
      <Tooltip>Stop analyzer</Tooltip>
      <ThdWindow>
        <ThdTitle>
          <ThdIcon>
            <svg width="12" height="8" viewBox="0 0 12 8"><path d="M0 7l2-5 2 5 2-5 2 5 2-5 2 5" stroke="#404040" fill="none" strokeWidth=".8" /></svg>
          </ThdIcon>
          THD
          <ThdClose><CloseGlyph /></ThdClose>
        </ThdTitle>
        <ThdBody>
          <BigValue>0.45515 %</BigValue>
          <BigValue>0.48113 %</BigValue>
        </ThdBody>
      </ThdWindow>
    </Desktop>
  );
}
